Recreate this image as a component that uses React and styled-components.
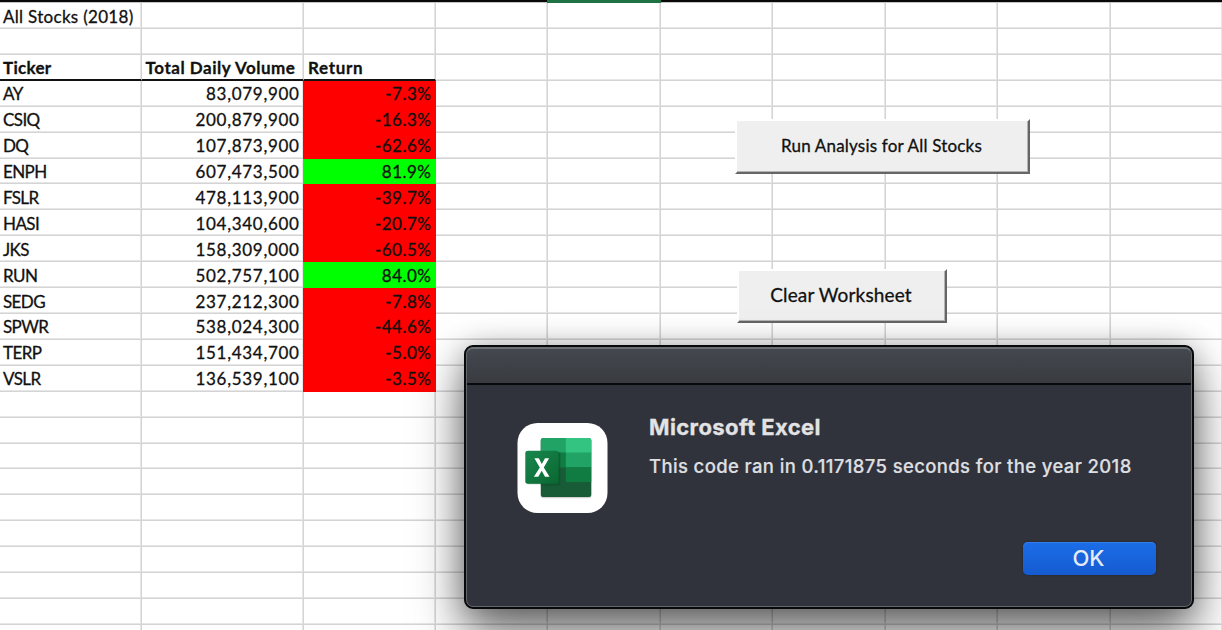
import React from 'react';
import styled, { createGlobalStyle, css } from 'styled-components';

const Global = createGlobalStyle`
  * { box-sizing: border-box; }
  body { margin: 0; background: #fff; overflow: hidden; }
`;

const Screen = styled.main`
  position: relative;
  width: 1222px;
  height: 630px;
  overflow: hidden;
  background: #fff;
  color: #111;
  font-family: Lato, "Liberation Sans", sans-serif;
`;

const HeaderEdge = styled.div`
  display: grid;
  grid-template-columns: 547px 114px 1fr;
  height: 3px;
`;

const EdgePart = styled.div`
  height: ${p => (p.$active ? 3 : 2)}px;
  background: ${p => (p.$active ? '#1f7244' : '#0b0809')};
  box-shadow: ${p => (p.$active ? 'none' : '0 1px #c4c4c4')};
`;

const Sheet = styled.div`
  display: grid;
  grid-template-columns: 141.6px 162.4px 132px repeat(6, 112.5px) 112px;
  grid-template-rows: 26px repeat(24, 25.91px);
`;

const Cell = styled.div`
  display: flex;
  align-items: center;
  justify-content: ${p => (p.$right ? 'flex-end' : 'flex-start')};
  min-width: 0;
  padding: 2px 4px 0 ${p => (p.$inset ? 4 : 3)}px;
  white-space: nowrap;
  border-right: 1px solid #d4d4d4;
  border-bottom: 1px solid #d4d4d4;
  box-shadow: inset -1px -1px #e6e6e6;
  font-size: 17px;
  line-height: 20px;
  -webkit-text-stroke: 0.3px currentColor;
  ${p => p.$head && css`
    font-weight: 700;
    border-bottom: 2px solid #111;
    box-shadow: inset -1px 0 #e6e6e6;
  `}
  ${p => p.$fill && css`
    background: ${p.$fill};
    border-color: ${p.$fill};
    box-shadow: -1px 0 ${p.$fill};
  `}
`;

const CellText = styled.span`
  letter-spacing: ${p => p.$spacing || 0}px;
  margin-right: ${p => -(p.$spacing || 0)}px;
`;

const SheetButton = styled.button`
  position: absolute;
  left: ${p => p.$x}px;
  top: ${p => p.$y}px;
  width: ${p => p.$w}px;
  height: ${p => p.$h}px;
  padding: 0 2px ${p => p.$lift}px 0;
  border-style: solid;
  border-width: 2px;
  border-color: #fff #666 #666 #fff;
  border-radius: 0;
  background: #efefef;
  box-shadow: inset -1px -1px #b4b4b4;
  color: #111;
  font: ${p => p.$size}px Lato, "Liberation Sans", sans-serif;
  letter-spacing: ${p => p.$spacing}px;
  -webkit-text-stroke: 0.3px currentColor;
`;

const Dialog = styled.section`
  position: absolute;
  left: 464px;
  top: 345px;
  width: 730px;
  height: 264px;
  border: 2px solid #08090b;
  border-radius: 9px;
  background: #31333c;
  box-shadow: 0 25px 50px rgba(0, 0, 0, 0.55), 0 2px 28px rgba(0, 0, 0, 0.26);
  overflow: hidden;
  font-family: Inter, "Liberation Sans", sans-serif;
  display: flex;
  flex-direction: column;
  &::after {
    content: '';
    position: absolute;
    inset: 0;
    border-radius: 7px;
    border: 1px solid #63676b;
    border-top: 2px solid #6b7174;
    pointer-events: none;
  }
`;

const TitleBar = styled.header`
  height: 38px;
  flex: none;
  background: linear-gradient(#444950, #393b40);
  border-bottom: 2px solid #08090b;
`;

const DialogBody = styled.div`
  display: flex;
  align-items: flex-start;
  padding: 37px 0 0 50px;
`;

const AppIcon = styled.svg`
  width: 92px;
  height: 92px;
  flex: none;
`;

const Message = styled.div`
  margin: -8px 0 0 41px;
  color: #e3e3e4;
  white-space: nowrap;
`;

const Title = styled.h1`
  margin: 0;
  font-size: 22px;
  line-height: 26px;
  font-weight: 700;
  letter-spacing: ${p => p.$spacing}px;
  -webkit-text-stroke: 0.3px currentColor;
`;

const Detail = styled.p`
  margin: 14px 0 0;
  font-size: 18.5px;
  line-height: 24px;
  font-weight: 500;
  color: #dedfe0;
  letter-spacing: ${p => p.$spacing}px;
  -webkit-text-stroke: 0.2px currentColor;
`;

const Actions = styled.footer`
  display: flex;
  justify-content: flex-end;
  margin-top: auto;
  padding: 0 36px 32px 0;
`;

const OkButton = styled.button`
  width: 133px;
  height: 33px;
  padding: 0 2px 0 0;
  border: 0;
  border-radius: 5px;
  background: linear-gradient(#1b6de8, #155bd0);
  box-shadow: 0 0 2px #20232b, inset 0 1px #337ce9;
  color: #e6ebfa;
  font: 500 22px/33px Inter, "Liberation Sans", sans-serif;
`;

const tickers = [
  ['AY', '83,079,900', '-7.3%'],
  ['CSIQ', '200,879,900', '-16.3%'],
  ['DQ', '107,873,900', '-62.6%'],
  ['ENPH', '607,473,500', '81.9%'],
  ['FSLR', '478,113,900', '-39.7%'],
  ['HASI', '104,340,600', '-20.7%'],
  ['JKS', '158,309,000', '-60.5%'],
  ['RUN', '502,757,100', '84.0%'],
  ['SEDG', '237,212,300', '-7.8%'],
  ['SPWR', '538,024,300', '-44.6%'],
  ['TERP', '151,434,700', '-5.0%'],
  ['VSLR', '136,539,100', '-3.5%'],
];

const rows = [['All Stocks (2018)'], [], ['Ticker', 'Total Daily Volume', 'Return'], ...tickers];
while (rows.length < 25) rows.push([]);

const headSpacing = [0.3, 0.53, 0.7];
const dataSpacing = [-0.6, 0.7, 0.5];

function SheetCell({ row, col }) {
  const value = rows[row][col];
  const isData = row > 2 && row < 15;
  const fill = isData && col === 2 ? (value.startsWith('-') ? '#ff0000' : '#00ff00') : undefined;
  const spacing = isData ? dataSpacing[col] : row === 2 ? headSpacing[col] : 0.3;
  return (
    <Cell $right={isData && col > 0} $inset={col > 0} $head={row === 2 && col < 3} $fill={fill}>
      {value && <CellText $spacing={spacing}>{value}</CellText>}
    </Cell>
  );
}

function ExcelIcon() {
  return (
    <AppIcon viewBox="0 0 92 92" aria-label="Excel">
      <defs>
        <linearGradient id="tile" x1="0" y1="0" x2="1" y2="1">
          <stop offset="0" stopColor="#18884f" />
          <stop offset="1" stopColor="#0b6631" />
        </linearGradient>
        <clipPath id="book"><rect x="24.8" y="16" width="50.5" height="59" rx="2.5" /></clipPath>
      </defs>
      <rect x="1.5" y="1" width="90" height="90" rx="20" fill="#fff" />
      <rect x="24.8" y="17.3" width="50.5" height="59" rx="2.5" fill="#777" opacity="0.35" />
      <g clipPath="url(#book)">
        <rect x="24" y="16" width="52" height="60" fill="#185c37" />
        <rect x="24" y="16" width="26" height="15" fill="#21a366" />
        <rect x="49.8" y="16" width="26" height="15" fill="#33c481" />
        <rect x="24" y="30.5" width="26" height="15" fill="#107c41" />
        <rect x="49.8" y="30.5" width="26" height="15" fill="#21a366" />
        <rect x="49.8" y="45.3" width="26" height="14.7" fill="#107c41" />
        <rect x="24" y="30" width="20.5" height="34" fill="#0b4e2a" opacity="0.4" />
      </g>
      <rect x="10.5" y="30.2" width="33" height="32" rx="2.5" fill="#0b4324" opacity="0.35" />
      <rect x="9.3" y="28.7" width="33.5" height="33" rx="2.5" fill="url(#tile)" />
      <path d="M17.9 54.8 L23.8 45.4 L18.4 36.2 H22.8 L25.8 42.1 L29 36.2 H33.1 L27.8 45.4 L33.5 54.8 H29 L25.7 48.8 L22.3 54.8 Z" fill="#fff" />
    </AppIcon>
  );
}

export default function App() {
  return (
    <Screen>
      <Global />
      <HeaderEdge><EdgePart /><EdgePart $active /><EdgePart /></HeaderEdge>
      <Sheet>
        {rows.flatMap((_, row) =>
          Array.from({ length: 10 }, (_, col) => <SheetCell key={`${row}-${col}`} row={row} col={col} />)
        )}
      </Sheet>
      <SheetButton $x={735} $y={119} $w={295} $h={55} $size={17} $spacing={0.2} $lift={2}>Run Analysis for All Stocks</SheetButton>
      <SheetButton $x={737} $y={269} $w={210} $h={54} $size={19} $spacing={0.15} $lift={4}>Clear Worksheet</SheetButton>
      <Dialog>
        <TitleBar />
        <DialogBody>
          <ExcelIcon />
          <Message>
            <Title $spacing={0.4}>Microsoft Excel</Title>
            <Detail $spacing={0.37}>This code ran in 0.1171875 seconds for the year 2018</Detail>
          </Message>
        </DialogBody>
        <Actions><OkButton>OK</OkButton></Actions>
      </Dialog>
    </Screen>
  );
}
